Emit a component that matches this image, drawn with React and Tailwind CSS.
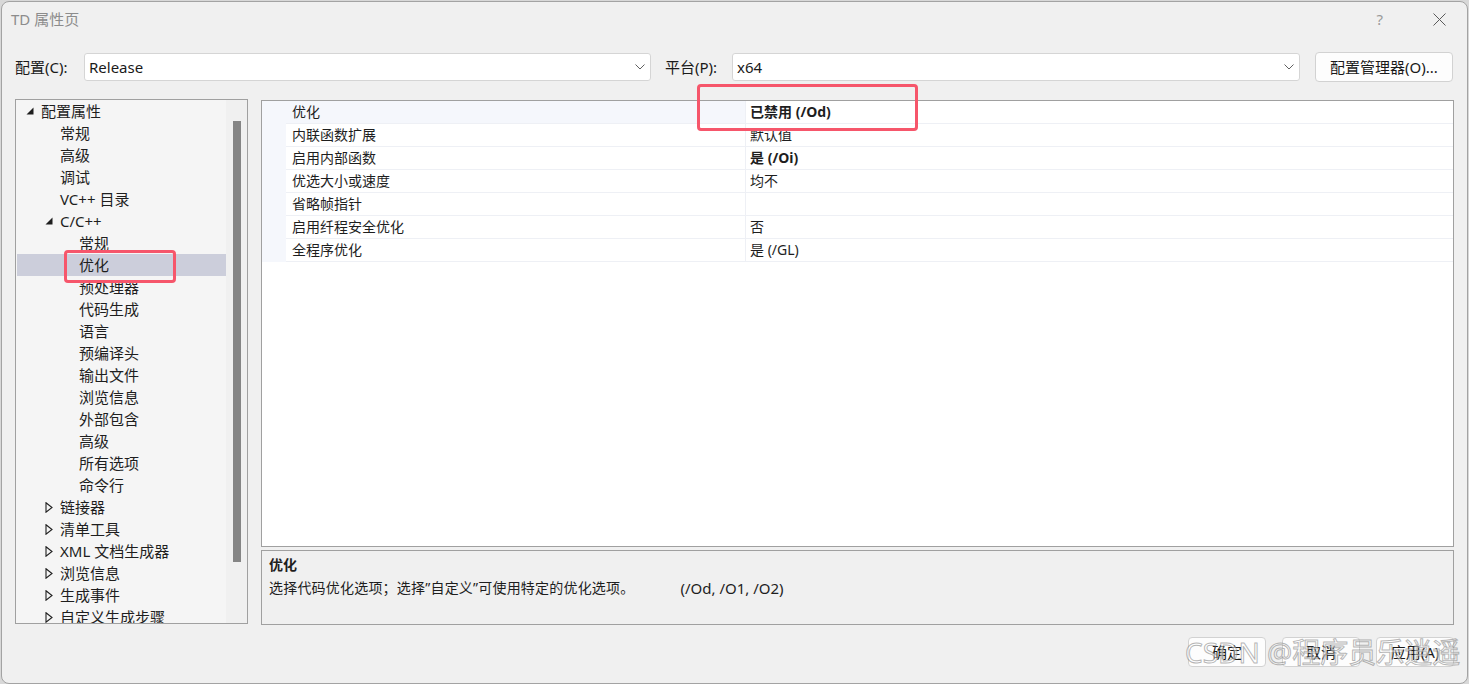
import React from "react";

const FONT = { fontFamily: '"Noto Sans","Noto Sans CJK SC",sans-serif' };

const tree = [
  { t: "配置属性", l: 0, i: "open" },
  { t: "常规", l: 1 },
  { t: "高级", l: 1 },
  { t: "调试", l: 1 },
  { t: "VC++ 目录", l: 1 },
  { t: "C/C++", l: 1, i: "open" },
  { t: "常规", l: 2 },
  { t: "优化", l: 2, sel: true },
  { t: "预处理器", l: 2 },
  { t: "代码生成", l: 2 },
  { t: "语言", l: 2 },
  { t: "预编译头", l: 2 },
  { t: "输出文件", l: 2 },
  { t: "浏览信息", l: 2 },
  { t: "外部包含", l: 2 },
  { t: "高级", l: 2 },
  { t: "所有选项", l: 2 },
  { t: "命令行", l: 2 },
  { t: "链接器", l: 1, i: "closed" },
  { t: "清单工具", l: 1, i: "closed" },
  { t: "XML 文档生成器", l: 1, i: "closed" },
  { t: "浏览信息", l: 1, i: "closed" },
  { t: "生成事件", l: 1, i: "closed" },
  { t: "自定义生成步骤", l: 1, i: "closed" },
];

const props = [
  ["优化", "已禁用 (/Od)", true],
  ["内联函数扩展", "默认值", false],
  ["启用内部函数", "是 (/Oi)", true],
  ["优选大小或速度", "均不", false],
  ["省略帧指针", "", false],
  ["启用纤程安全优化", "否", false],
  ["全程序优化", "是 (/GL)", false],
];

const padFor = ["pl-[10px]", "pl-[29px]", "pl-[48px]"];

function Chevron() {
  return (
    <svg width="10" height="6" viewBox="0 0 10 6" className="shrink-0">
      <path d="M0.5 0.5 L5 5 L9.5 0.5" fill="none" stroke="#606060" strokeWidth="1" />
    </svg>
  );
}

function Select({ value, w }) {
  return (
    <div className={`${w} h-[28px] bg-white border border-[#d5d5d5] rounded-[3px] flex items-center justify-between pl-[4px] pr-[5px]`}>
      <span className="text-[15px] leading-none text-[#1a1a1a]">{value}</span>
      <Chevron />
    </div>
  );
}

function Button({ children, w }) {
  return (
    <div className={`${w} h-[30px] bg-[#fdfdfd] border border-[#d2d2d2] rounded-[4px] flex items-center justify-center text-[15px] leading-none text-[#1a1a1a]`}>
      {children}
    </div>
  );
}

function TreeIcon({ kind }) {
  if (kind === "open")
    return (
      <svg width="8" height="8" viewBox="0 0 8 8">
        <path d="M7.5 0.5 L7.5 7.5 L0.5 7.5 Z" fill="#1e1e1e" />
      </svg>
    );
  if (kind === "closed")
    return (
      <svg width="8" height="11" viewBox="0 0 8 11">
        <path d="M1 0.8 L7 5.5 L1 10.2 Z" fill="none" stroke="#1e1e1e" strokeWidth="1.1" />
      </svg>
    );
  return null;
}

export default function App() {
  return (
    <div className="w-[1469px] h-[684px] bg-[#d8d8d8] pl-px pt-px overflow-hidden" style={FONT}>
      <div className="relative w-[1467px] h-[683px] bg-[#f0f0f0] border border-[#a3a3a3] rounded-lg flex flex-col overflow-hidden">
        {/* Title bar */}
        <div className="h-[34px] flex items-center pl-[9px] pr-[21px] shrink-0">
          <span className="text-[15px] leading-none text-[#8c8c8c]">TD 属性页</span>
          <div className="ml-auto flex items-center gap-[50px]">
            <span className="text-[15px] leading-none text-[#9a9a9a]">?</span>
            <svg width="13" height="13" viewBox="0 0 13 13">
              <path d="M0.5 0.5 L12.5 12.5 M12.5 0.5 L0.5 12.5" stroke="#5a5a5a" strokeWidth="1" />
            </svg>
          </div>
        </div>

        {/* Config row */}
        <div className="mt-[16px] h-[30px] flex items-center pl-[13px] shrink-0">
          <span className="w-[69px] text-[15px] leading-none text-[#1a1a1a]">配置(C):</span>
          <Select value="Release" w="w-[567px]" />
          <span className="ml-[14px] w-[67px] text-[15px] leading-none text-[#1a1a1a]">平台(P):</span>
          <Select value="x64" w="w-[568px]" />
          <div className="ml-[15px]">
            <Button w="w-[138px]">配置管理器(O)...</Button>
          </div>
        </div>

        {/* Main */}
        <div className="mt-[17px] h-[526px] flex items-start pl-[13px] shrink-0">
          {/* Tree */}
          <div className="w-[233px] h-[525px] border border-[#a0a0a0] bg-[#f5f5f5] flex overflow-hidden">
            <div className="flex-1 flex flex-col overflow-hidden">
              {tree.map((n, idx) => (
                <div
                  key={idx}
                  className={`h-[22px] shrink-0 flex items-center ${padFor[n.l]} ${n.sel ? "bg-[#cccedb] ml-px" : ""}`}
                >
                  <div className={`w-[15px] shrink-0 flex items-center ${n.sel ? "-ml-px" : ""}`}>
                    <TreeIcon kind={n.i} />
                  </div>
                  <span className="text-[15px] leading-none text-[#1e1e1e] whitespace-nowrap">{n.t}</span>
                </div>
              ))}
            </div>
            <div className="w-[21px] shrink-0 bg-[#f0f0f0] flex justify-center pt-[21px]">
              <div className="w-[8px] h-[441px] bg-[#858585]" />
            </div>
          </div>

          {/* Right column */}
          <div className="ml-[13px] mt-px w-[1193px] flex flex-col">
            <div className="h-[447px] border border-[#a0a0a0] bg-white flex flex-col">
              {props.map(([name, val, bold], idx) => (
                <div key={idx} className="h-[23px] flex shrink-0">
                  <div className="w-[24px] bg-[#f5f7fc] shrink-0" />
                  <div
                    className={`w-[460px] shrink-0 flex items-center pl-[6px] border-b border-r border-[#eef0f5] ${idx === 0 ? "bg-[#f5f7fc]" : "bg-white"}`}
                  >
                    <span className="text-[14px] leading-none text-[#1e1e1e]">{name}</span>
                  </div>
                  <div className="flex-1 flex items-center pl-[4px] border-b border-[#eef0f5]">
                    <span className={`text-[14px] leading-none text-[#1e1e1e] ${bold ? "font-bold" : ""}`}>{val}</span>
                  </div>
                </div>
              ))}
            </div>
            <div className="mt-[3px] h-[75px] border border-[#a0a0a0] bg-[#f0f0f0] flex flex-col pl-[7px] pt-[6px]">
              <span className="text-[14px] leading-[16px] font-bold text-[#1e1e1e]">优化</span>
              <div className="mt-[7px] flex items-center text-[14px] leading-[16px] text-[#1e1e1e]">
                <span className="tracking-[0.2px]">选择代码优化选项；选择”自定义”可使用特定的优化选项。</span>
                <span className="ml-[46px] text-[15px]">(/Od, /O1, /O2)</span>
              </div>
            </div>
          </div>
        </div>

        {/* Buttons */}
        <div className="mt-[12px] flex justify-end gap-[16px] pr-[13px] shrink-0">
          <Button w="w-[78px]">确定</Button>
          <Button w="w-[78px]">取消</Button>
          <Button w="w-[78px]">应用(A)</Button>
        </div>

        {/* Red highlight boxes */}
        <div className="absolute left-[695px] top-[82px] w-[221px] h-[47px] border-[3px] border-[#f6566b] rounded-[4px]" />
        <div className="absolute left-[62px] top-[248px] w-[112px] h-[33px] border-[3px] border-[#f6566b] rounded-[4px]" />

        {/* Watermark */}
        <div className="absolute left-[1183px] top-[636px] text-[28px] leading-none whitespace-nowrap text-[rgba(255,255,255,0.5)] [-webkit-text-stroke:1px_rgba(110,110,110,0.5)]">
          CSDN @程序员乐逍遥
        </div>
      </div>
    </div>
  );
}
